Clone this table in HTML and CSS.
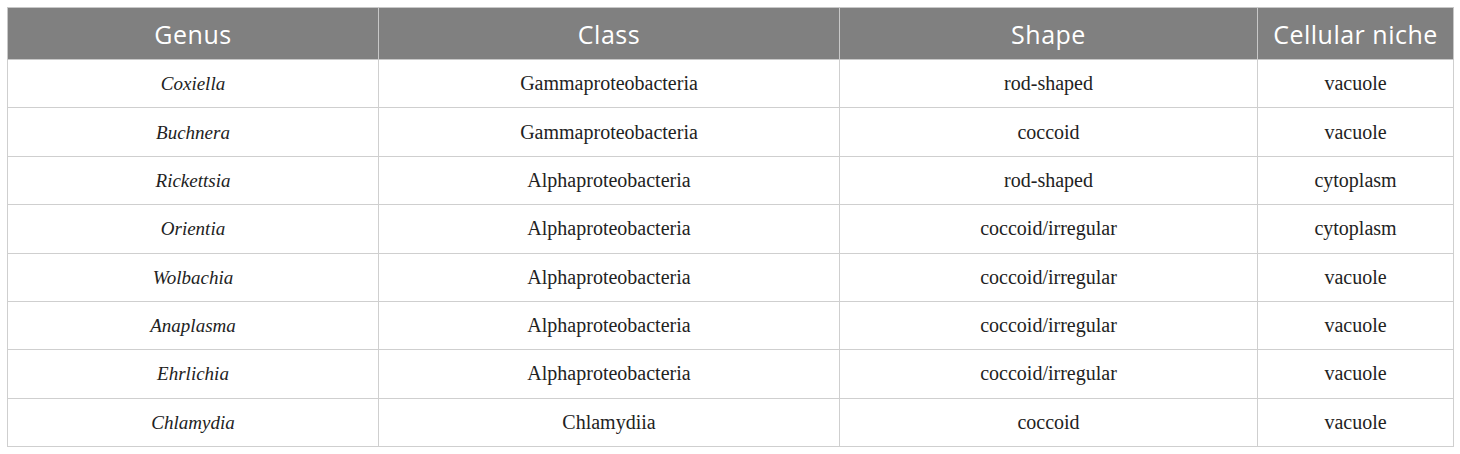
FILE: index.html
```html
<!DOCTYPE html>
<html>
<head>
<meta charset="utf-8">
<link rel="stylesheet" href="styles.css">
</head>
<body>
<table class="data">
  <colgroup>
    <col class="c1"><col class="c2"><col class="c3"><col class="c4">
  </colgroup>
  <thead>
    <tr><th>Genus</th><th>Class</th><th>Shape</th><th>Cellular niche</th></tr>
  </thead>
  <tbody>
    <tr><td><i>Coxiella</i></td><td>Gammaproteobacteria</td><td>rod-shaped</td><td>vacuole</td></tr>
    <tr><td><i>Buchnera</i></td><td>Gammaproteobacteria</td><td>coccoid</td><td>vacuole</td></tr>
    <tr><td><i>Rickettsia</i></td><td>Alphaproteobacteria</td><td>rod-shaped</td><td>cytoplasm</td></tr>
    <tr><td><i>Orientia</i></td><td>Alphaproteobacteria</td><td>coccoid/irregular</td><td>cytoplasm</td></tr>
    <tr><td><i>Wolbachia</i></td><td>Alphaproteobacteria</td><td>coccoid/irregular</td><td>vacuole</td></tr>
    <tr><td><i>Anaplasma</i></td><td>Alphaproteobacteria</td><td>coccoid/irregular</td><td>vacuole</td></tr>
    <tr><td><i>Ehrlichia</i></td><td>Alphaproteobacteria</td><td>coccoid/irregular</td><td>vacuole</td></tr>
    <tr><td><i>Chlamydia</i></td><td>Chlamydiia</td><td>coccoid</td><td>vacuole</td></tr>
  </tbody>
</table>
</body>
</html>
```
FILE: styles.css
```css
html, body {
  margin: 0;
  padding: 0;
  background: #ffffff;
}
body {
  padding: 7px;
}
.data {
  width: 1446px;
  border-collapse: collapse;
  table-layout: fixed;
}
.c1 { width: 371px; }
.c2 { width: 461px; }
.c3 { width: 418px; }
.c4 { width: 196px; }
.data th {
  background: #808080;
  color: #ffffff;
  font-family: "Open Sans", "Noto Sans", sans-serif;
  font-weight: normal;
  font-size: 25px;
  letter-spacing: 0.5px;
  height: 51px;
  padding: 0;
  border: 1px solid #c8c8c8;
  text-align: center;
  vertical-align: middle;
}
.data td {
  font-family: "Liberation Serif", "Times New Roman", serif;
  font-size: 20px;
  color: #222222;
  height: 47.375px;
  padding: 0;
  border: 1px solid #cfcfcf;
  text-align: center;
  vertical-align: middle;
}
.data td i {
  font-size: 19px;
}
```
